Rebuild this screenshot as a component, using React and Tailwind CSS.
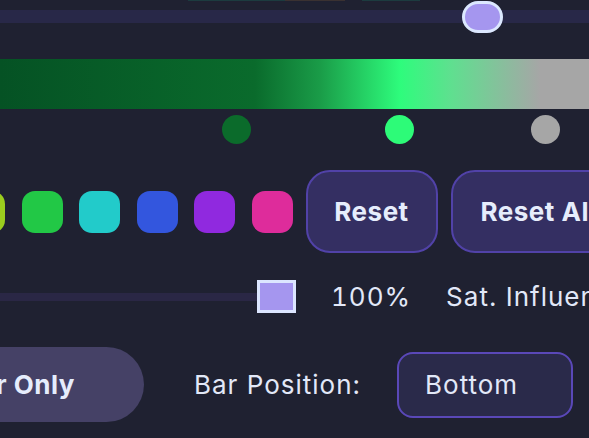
export default function App() {
  const swatches = ["#9bcd1e", "#22c846", "#22cbca", "#3356de", "#9029df", "#de2c9b"];
  return (
    <div className="w-[589px] h-[438px] overflow-hidden bg-[#1f2131] flex flex-col" style={{ fontFamily: "Inter, 'Noto Sans', sans-serif" }}>
      {/* top sliver */}
      <div className="h-[1px] flex ml-[188px]">
        <div className="w-[97px] bg-[#1c3b3f]" />
        <div className="w-[60px] bg-[#3a3131]" />
        <div className="w-[17px]" />
        <div className="w-[58px] bg-[#1c3b3f]" />
      </div>
      {/* slider */}
      <div className="relative h-[32px]">
        <div className="mt-[9px] h-[13px] bg-[#282848]" />
        <div className="absolute top-0 left-[462px] w-[41px] h-[32px] rounded-full bg-[#a596ef] border-[3px] border-[#dce8ff]" />
      </div>
      {/* gradient bar */}
      <div
        className="mt-[26px] h-[50px] bg-[linear-gradient(90deg,#055224_0px,#0a6b2c_255px,#1a9c48_320px,#2efc7c_400px,#5ee08f_450px,#a6a6a6_540px,#a6a6a6_589px)]"
      />
      {/* stops */}
      <div className="relative mt-[6px] h-[29px]">
        <div className="absolute top-0 left-[222px] w-[29px] h-[29px] rounded-full bg-[#0b6b2b]" />
        <div className="absolute top-0 left-[385px] w-[29px] h-[29px] rounded-full bg-[#2dfb78]" />
        <div className="absolute top-0 left-[531px] w-[29px] h-[29px] rounded-full bg-[#a6a6a6]" />
      </div>
      {/* swatches + buttons */}
      <div className="mt-[26px] h-[83px] flex items-center -ml-[36px]">
        <div className="flex gap-[16.5px]">
          {swatches.map((c) => (
            <div key={c} className="w-[41px] h-[42px] rounded-[13px]" style={{ backgroundColor: c }} />
          ))}
        </div>
        <button className="ml-[13px] shrink-0 w-[132px] h-[83px] rounded-[24px] border-2 border-[#5142a8] bg-[#342f62] text-[26px] font-bold tracking-[0.5px] text-[#e6edfc]">
          Reset
        </button>
        <button className="ml-[13px] shrink-0 w-[190px] h-[83px] rounded-[24px] border-2 border-[#5142a8] bg-[#342f62] text-[26px] font-bold tracking-[0.5px] text-[#e6edfc] text-left pl-[28px] whitespace-nowrap">
          Reset All
        </button>
      </div>
      {/* saturation slider row */}
      <div className="mt-[27px] h-[33px] flex items-center">
        <div className="w-[257px] h-[8px] bg-[#2a2745] shrink-0" />
        <div className="w-[39px] h-[33px] shrink-0 bg-[#a596ef] border-[3px] border-[#dce6ff]" />
        <span className="ml-[35px] text-[26px] tracking-[1px] tabular-nums text-[#e2e8f8] whitespace-nowrap">100%</span>
        <span className="ml-[35px] text-[26px] tracking-[1px] text-[#e2e8f8] whitespace-nowrap">Sat. Influence</span>
      </div>
      {/* bottom row */}
      <div className="mt-[34px] h-[75px] flex items-center">
        <div className="-ml-[116px] w-[260px] h-[75px] shrink-0 rounded-full bg-[#454166] flex items-center justify-end pr-[69px] text-[26px] font-bold tracking-[0.5px] text-[#e6edfc] whitespace-nowrap">
          Color Only
        </div>
        <span className="ml-[50px] text-[26px] tracking-[1px] text-[#e2e8f8] whitespace-nowrap">Bar Position:</span>
        <div className="ml-[36px] w-[176px] h-[66px] shrink-0 rounded-[16px] border-2 border-[#5a48b8] bg-[#2a2a4a] flex items-center pl-[26px] text-[26px] tracking-[1px] text-[#e2e8f8]">
          Bottom
        </div>
      </div>
    </div>
  );
}
